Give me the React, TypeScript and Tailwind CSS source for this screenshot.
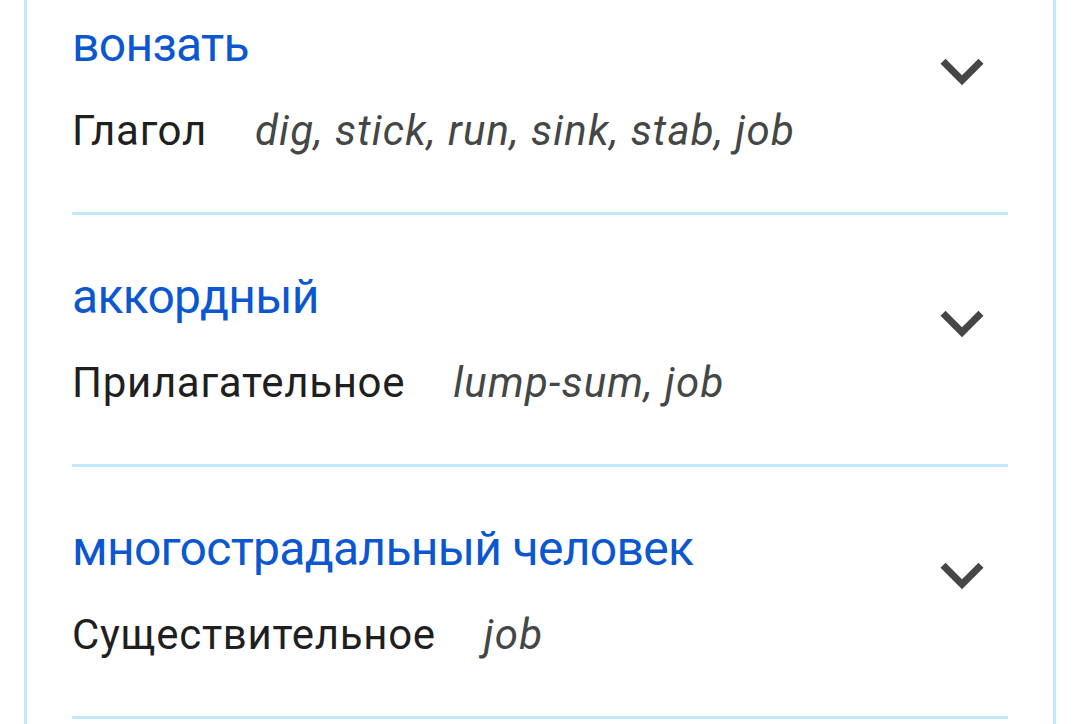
const entries = [
  { word: 'вонзать', pos: 'Глагол', trans: 'dig, stick, run, sink, stab, job' },
  { word: 'аккордный', pos: 'Прилагательное', trans: 'lump-sum, job' },
  { word: 'многострадальный человек', pos: 'Существительное', trans: 'job' },
]

function ExpandMore() {
  return (
    <svg viewBox="0 0 24 24" className="w-[86px] h-[86px] shrink-0 mt-[15px] mr-[3px]" fill="#444746">
      <path d="M16.59 8.59L12 13.17 7.41 8.59 6 10l6 6 6-6z" />
    </svg>
  )
}

export default function App() {
  return (
    <div className="w-[1079px] h-[724px] overflow-hidden bg-white font-['Roboto',sans-serif]">
      <div className="ml-[24px] w-[1032px] h-full flex flex-col border-x-[3px] border-[#c2e7ff] px-[45px]">
        <div className="-mt-[37px]">
          {entries.map((e) => (
            <div key={e.word} className="flex items-start border-b-[3px] border-[#c2e7ff] pt-[50px] pb-[51px]">
              <div className="flex-1 min-w-0">
                <div className="text-[48px] leading-[64px] tracking-[-0.7px] text-[#0b57d0]">{e.word}</div>
                <div className="mt-[24px] flex items-baseline text-[42px] leading-[60px]">
                  <span className="tracking-[0.7px] text-[#1f1f1f]">{e.pos}</span>
                  <span className="ml-[48px] italic tracking-[1.2px] text-[#444746]">{e.trans}</span>
                </div>
              </div>
              <ExpandMore />
            </div>
          ))}
        </div>
      </div>
    </div>
  )
}
